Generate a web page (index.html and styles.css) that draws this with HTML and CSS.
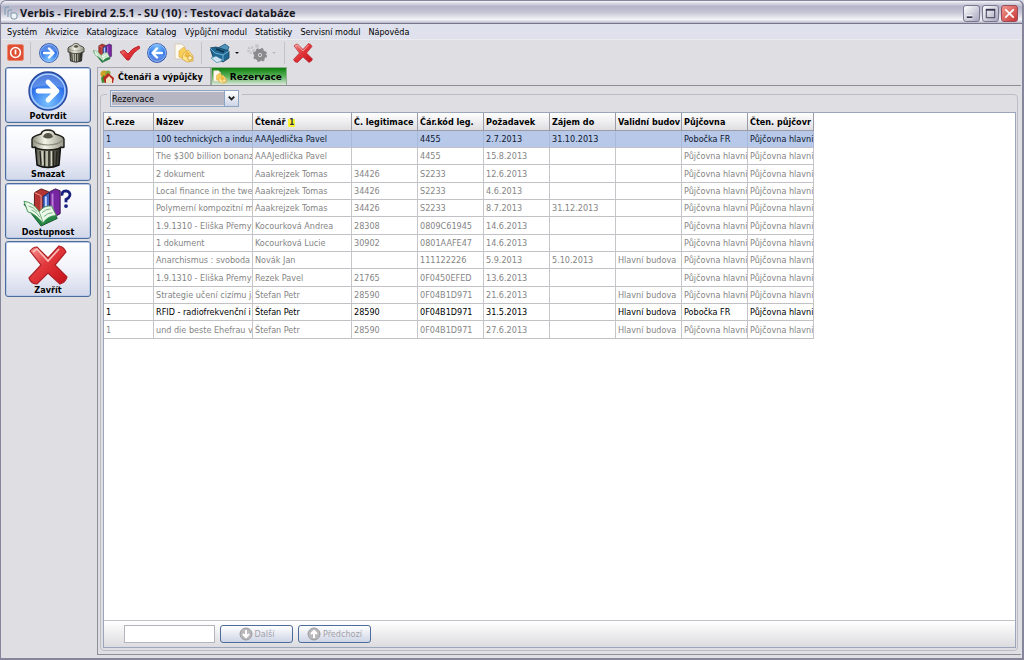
FILE: index.html
```html
<!DOCTYPE html>
<html lang="cs">
<head>
<meta charset="utf-8">
<title>Verbis - Firebird 2.5.1 - SU (10) : Testovací databáze</title>
<link rel="stylesheet" href="styles.css">
</head>
<body>
<svg class="defs" aria-hidden="true">
  <defs>
    <radialGradient id="blue" cx=".5" cy=".8" r=".8"><stop offset="0" stop-color="#7cc4ff"/><stop offset=".6" stop-color="#2f74ea"/><stop offset="1" stop-color="#1d50c8"/></radialGradient>
    <linearGradient id="red" x1="0" y1="0" x2="1" y2="1"><stop offset="0" stop-color="#f79a96"/><stop offset=".45" stop-color="#e2383c"/><stop offset="1" stop-color="#c40f18"/></linearGradient>
    <linearGradient id="metal"><stop offset="0" stop-color="#3a3a32"/><stop offset=".3" stop-color="#b4b4a4"/><stop offset=".6" stop-color="#77776a"/><stop offset="1" stop-color="#25251f"/></linearGradient>
    <linearGradient id="lid"><stop offset="0" stop-color="#8c8c7c"/><stop offset=".4" stop-color="#f4f4e8"/><stop offset="1" stop-color="#98988a"/></linearGradient>
    <symbol id="arrow" viewBox="0 0 40 40"><circle cx="20" cy="20" r="19" fill="url(#blue)" stroke="#2a4a9c" stroke-width="1.4"/><circle cx="20" cy="20" r="17" fill="none" stroke="#a8cbfa" stroke-width="1.6"/><path d="M5 17a15 14 0 0 1 30 0q-15-5-30 0z" fill="#fff" opacity=".22"/><path d="M10 20h18M20 11l9 9-9 9" fill="none" stroke="#fff" stroke-width="4.8" stroke-linecap="round" stroke-linejoin="round"/></symbol>
    <symbol id="trash" viewBox="0 0 36 40"><path d="M5 14l2 22q11 5 22 0l2-22z" fill="url(#metal)" stroke="#111" stroke-width="1.4"/><path d="M10 22l1 14M14.500 22v16M19 22v16M23.500 22v15M27 22l-1 14" stroke="#26261f" stroke-width="1.400"/><path d="M12 22l1 14M17 22v15M21.500 22v15" stroke="#d4d4c2" stroke-width="1.200"/><path d="M2 10q1-3 9-5 1-4 7-4t7 4q8 2 9 5v8q-2 1-3 0-3 3-13 3T5 18q-1 1-3 0z" fill="url(#lid)" stroke="#1a1a16" stroke-width="1.4"/><path d="M3 11q5 5 15 5t15-5" fill="none" stroke="#8a8a7c" stroke-width="1.200"/><path d="M13 8q1-4 5-4t5 4q-5 3-10 0z" fill="#55554a"/></symbol>
    <symbol id="books" viewBox="0 0 42 40"><path d="M12 5l7-4 8 3v22l-8 4-7-3z" fill="#b33430" stroke="#5b1715"/><path d="M12 5l7 3v21" fill="none" stroke="#ef9c94"/><path d="M21 9l6-4 6 3v19l-12 2z" fill="#4267c4" stroke="#182862"/><path d="M24 9v15" stroke="#c5d6ff" stroke-width="2"/><path d="M28 4l6-3 5 2v24l-9 5-2-3z" fill="#7526a0" stroke="#37104c"/><path d="M31 6v23" stroke="#bd7fda" stroke-width="2"/><path d="M1 17l16 10 13-6 6 11-17 8z" fill="#258545" stroke="#145529"/><path d="M1 14q10 1 16 11 5-7 13-6l5 10q-9 0-14 8Q13 27 5 25z" fill="#eaf8e9" stroke="#429454"/><path d="M17 25l4 11M6 19q5 1 9 6M9 23q5 2 9 8M20 26q4-4 9-4M22 30q4-4 9-4" fill="none" stroke="#78a97d"/></symbol>
    <symbol id="question" viewBox="0 0 12 20"><path d="M2 7q-1-5 4-5 5 1 4 5-1 3-4 4v3" fill="none" stroke="#16207c" stroke-width="3"/><circle cx="6" cy="18" r="2" fill="#16207c"/></symbol>
    <symbol id="cross" viewBox="0 0 40 40"><path d="M2 6q3-4 7-4l11 11L31 1q5 1 7 6L27 20l12 12q-1 5-7 7L20 28 9 39q-6 0-8-6l12-13z" fill="url(#red)" stroke="#ad2028" stroke-width="1.200"/><path d="M5 7l4-3 11 12L31 4" fill="none" stroke="#fbc0bb" stroke-width="1.600"/></symbol>
    <symbol id="power" viewBox="0 0 18 18"><rect x=".5" y=".5" width="17" height="17" rx="2" fill="#df4f33" stroke="#ed8a70"/><circle cx="9" cy="9" r="5.200" fill="none" stroke="#fff" stroke-width="1.600"/><path d="M9 6v5" stroke="#fff" stroke-width="1.800"/></symbol>
    <symbol id="check" viewBox="0 0 20 18"><path d="M0 8l4-2 4 4Q12 4 19 2l1 2Q13 8 9 16H7z" fill="url(#red)" stroke="#b4141c" stroke-width=".8"/></symbol>
    <symbol id="pages" viewBox="0 0 20 20"><path d="M1 1h7l3 3v12H1z" fill="#fffaf0" stroke="#d5cbb8"/><path d="M5 8l5-4 3 5-4 6-4-1z" fill="#f7cf5a" stroke="#dba840" stroke-width=".7"/><path d="M9 11l5-4 5 6v5l-6 1-5-3z" fill="#ffe68e" stroke="#d8a43c" stroke-width=".8"/><path d="M13 8l3 3-2 4-4-2z" fill="#edb944"/><circle cx="16" cy="15" r="2.300" fill="#fff2b8" stroke="#d09b38"/></symbol>
    <symbol id="printer" viewBox="0 0 20 20"><path d="M8 5l7-4 4 3-2 5z" fill="#4f93ba" stroke="#1f5577" stroke-width=".8"/><path d="M0 5l6-1 13 4v7l-6 4L3 14z" fill="#1f6690" stroke="#123f58" stroke-width=".8"/><path d="M0 5l5 5 8 2 6-4M13 12v6" fill="none" stroke="#72b4db"/><path d="M1 15l5-2 7 4-6 3z" fill="#cde4f1" stroke="#3a81aa" stroke-width=".7"/><path d="M6 6l8 3" stroke="#0e3148" stroke-width="1.600"/></symbol>
    <symbol id="gears" viewBox="0 0 20 20"><circle cx="4" cy="7" r="2.600" fill="none" stroke="#c4c4c8" stroke-width="2.400" stroke-dasharray="2 1"/><circle cx="10" cy="3" r="2" fill="#c8c8cb"/><circle cx="13" cy="12" r="4" fill="none" stroke="#8a8a8d" stroke-width="4"/><circle cx="13" cy="12" r="6.200" fill="none" stroke="#8a8a8d" stroke-width="1.600" stroke-dasharray="2.500 2.400"/><circle cx="13" cy="12" r="1" fill="#77777a"/></symbol>
    <symbol id="people" viewBox="0 0 14 14"><circle cx="4" cy="4" r="3.500" fill="#c9a227"/><path d="M1 8l3-3 3 7-5 1z" fill="#3e8c2e"/><circle cx="8" cy="3" r="2.500" fill="#7fa83c"/><path d="M3 8l5-5 6 5-1 5H5z" fill="#b92a22"/><path d="M6 9l3-3 3 3v4H6z" fill="#f3e2c4"/></symbol>
    <symbol id="round" viewBox="0 0 14 14"><circle cx="7" cy="7" r="6" fill="#b9b9bc" stroke="#9a9a9e"/><path d="M7 3v7M4 7l3 3 3-3" fill="none" stroke="#fff" stroke-width="2"/></symbol>
    <symbol id="app" viewBox="0 0 14 14"><path d="M1 9V3q0-2 2-2h2M4 11V6q0-2 2-2h2" fill="none" stroke="#8aa4b8" stroke-width="1.300"/><path d="M7 7h4q2 0 2 2v2q0 2-2 2H9q-2 0-2-2z" fill="#eef3f6" stroke="#7b93a6"/></symbol>
  </defs>
</svg>
<div class="window">
  <header class="titlebar">
    <svg class="app-icon"><use href="#app"/></svg>
    <h1>Verbis - Firebird 2.5.1 - SU (10) : Testovací databáze</h1>
    <div class="window-buttons">
      <button type="button" aria-label="Minimalizovat"><svg viewBox="0 0 16 16"><path d="M3 12h6" stroke="#fff" stroke-width="4"/><path d="M3 12h6" stroke="#34364e" stroke-width="2"/></svg></button>
      <button type="button" aria-label="Maximalizovat"><svg viewBox="0 0 16 16"><path d="M3.500 4v8.500h9V4" fill="none" stroke="#34364e"/><path d="M3 4h10" stroke="#34364e" stroke-width="2"/></svg></button>
      <button type="button" class="close" aria-label="Zavřít okno"><svg viewBox="0 0 16 16"><path d="M3.500 3.500l9 9m0-9l-9 9" stroke="#fff" stroke-width="1.800"/></svg></button>
    </div>
  </header>
  <nav class="menu">
    <button type="button">Systém</button><button type="button">Akvizice</button><button type="button">Katalogizace</button><button type="button">Katalog</button><button type="button">Výpůjční modul</button><button type="button">Statistiky</button><button type="button">Servisní modul</button><button type="button">Nápověda</button>
  </nav>
  <div class="toolbar" role="toolbar">
    <button type="button" class="small" aria-label="Konec"><svg><use href="#power"/></svg></button>
    <i class="separator"></i>
    <button type="button" aria-label="Vpřed"><svg><use href="#arrow"/></svg></button>
    <button type="button" aria-label="Koš"><svg><use href="#trash"/></svg></button>
    <button type="button" aria-label="Knihy"><svg><use href="#books"/></svg></button>
    <button type="button" aria-label="Výběr"><svg><use href="#check"/></svg></button>
    <button type="button" aria-label="Zpět"><svg class="flip"><use href="#arrow"/></svg></button>
    <button type="button" aria-label="Dokumenty"><svg><use href="#pages"/></svg></button>
    <i class="separator"></i>
    <button type="button" class="drop" aria-label="Tisk"><svg><use href="#printer"/></svg></button>
    <button type="button" class="drop" disabled aria-label="Nastavení"><svg><use href="#gears"/></svg></button>
    <i class="separator"></i>
    <button type="button" aria-label="Zrušit"><svg><use href="#cross"/></svg></button>
  </div>
  <div class="body">
    <aside class="actions">
      <button type="button"><svg><use href="#arrow"/></svg><span>Potvrdit</span></button>
      <button type="button"><svg><use href="#trash"/></svg><span>Smazat</span></button>
      <button type="button"><svg class="wide" viewBox="0 0 50 40"><use href="#books" width="40" height="40"/><use href="#question" x="37" y="2" width="12" height="19"/></svg><span>Dostupnost</span></button>
      <button type="button"><svg><use href="#cross"/></svg><span>Zavřít</span></button>
    </aside>
    <main class="content">
      <div class="tabs" role="tablist">
        <button type="button" role="tab" class="tab"><svg><use href="#people"/></svg>Čtenáři a výpůjčky</button>
        <button type="button" role="tab" aria-selected="true" class="tab active"><svg><use href="#pages"/></svg>Rezervace</button>
      </div>
      <section class="panel">
        <div class="group">
          <div class="group-title"><div class="combo"><select aria-label="Zobrazení"><option>Rezervace</option></select><svg viewBox="0 0 14 14"><path d="M4 5l3 3 3-3" fill="none" stroke="#222" stroke-width="2"/></svg></div></div>
          <div class="grid">
            <div class="scroll">
              <table>
                <colgroup><col class="c-num"><col class="c-wide"><col class="c-wide"><col><col><col><col><col><col><col></colgroup>
                <thead><tr><th>Č.reze</th><th>Název</th><th>Čtenář <mark>1</mark></th><th>Č. legitimace</th><th>Čár.kód leg.</th><th>Požadavek</th><th>Zájem do</th><th>Validní budov</th><th>Půjčovna</th><th>Čten. půjčovr</th></tr></thead>
                <tbody>
                  <tr class="selected"><td>1</td><td>100 technických a indus</td><td>AAAJedlička Pavel</td><td></td><td>4455</td><td>2.7.2013</td><td>31.10.2013</td><td></td><td>Pobočka FR</td><td>Půjčovna hlavni</td></tr>
                  <tr><td>1</td><td>The $300 billion bonanza</td><td>AAAJedlička Pavel</td><td></td><td>4455</td><td>15.8.2013</td><td></td><td></td><td>Půjčovna hlavni</td><td>Půjčovna hlavni</td></tr>
                  <tr><td>1</td><td>2 dokument</td><td>Aaakrejzek Tomas</td><td>34426</td><td>S2233</td><td>12.6.2013</td><td></td><td></td><td>Půjčovna hlavni</td><td>Půjčovna hlavni</td></tr>
                  <tr><td>1</td><td>Local finance in the twer</td><td>Aaakrejzek Tomas</td><td>34426</td><td>S2233</td><td>4.6.2013</td><td></td><td></td><td>Půjčovna hlavni</td><td>Půjčovna hlavni</td></tr>
                  <tr><td>1</td><td>Polymerní kompozitní ma</td><td>Aaakrejzek Tomas</td><td>34426</td><td>S2233</td><td>8.7.2013</td><td>31.12.2013</td><td></td><td>Půjčovna hlavni</td><td>Půjčovna hlavni</td></tr>
                  <tr><td>2</td><td>1.9.1310 - Eliška Přemys</td><td>Kocourková Andrea</td><td>28308</td><td>0809C61945</td><td>14.6.2013</td><td></td><td></td><td>Půjčovna hlavni</td><td>Půjčovna hlavni</td></tr>
                  <tr><td>1</td><td>1 dokument</td><td>Kocourková Lucie</td><td>30902</td><td>0801AAFE47</td><td>14.6.2013</td><td></td><td></td><td>Půjčovna hlavni</td><td>Půjčovna hlavni</td></tr>
                  <tr><td>1</td><td>Anarchismus : svoboda</td><td>Novák Jan</td><td></td><td>111122226</td><td>5.9.2013</td><td>5.10.2013</td><td>Hlavní budova</td><td>Půjčovna hlavni</td><td>Půjčovna hlavni</td></tr>
                  <tr><td>1</td><td>1.9.1310 - Eliška Přemys</td><td>Rezek Pavel</td><td>21765</td><td>0F0450EFED</td><td>13.6.2013</td><td></td><td></td><td>Půjčovna hlavni</td><td>Půjčovna hlavni</td></tr>
                  <tr><td>1</td><td>Strategie učení cizímu ja</td><td>Štefan Petr</td><td>28590</td><td>0F04B1D971</td><td>21.6.2013</td><td></td><td>Hlavní budova</td><td>Půjčovna hlavni</td><td>Půjčovna hlavni</td></tr>
                  <tr class="ready"><td>1</td><td>RFID - radiofrekvenční i</td><td>Štefan Petr</td><td>28590</td><td>0F04B1D971</td><td>31.5.2013</td><td></td><td>Hlavní budova</td><td>Pobočka FR</td><td>Půjčovna hlavni</td></tr>
                  <tr><td>1</td><td>und die beste Ehefrau v</td><td>Štefan Petr</td><td>28590</td><td>0F04B1D971</td><td>27.6.2013</td><td></td><td>Hlavní budova</td><td>Půjčovna hlavni</td><td>Půjčovna hlavni</td></tr>
                </tbody>
              </table>
            </div>
            <div class="search">
              <input type="text" aria-label="Hledat">
              <button type="button" disabled><svg><use href="#round"/></svg>Další</button>
              <button type="button" disabled><svg class="up"><use href="#round"/></svg>Předchozí</button>
            </div>
          </div>
        </div>
      </section>
    </main>
  </div>
</div>
</body>
</html>
```
FILE: styles.css
```css
* { box-sizing: border-box; }
body { margin: 0; background: #dedee6; color: #000; font: 9px/14px "DejaVu Sans Condensed", "DejaVu Sans", sans-serif; }
button, input, select { font: inherit; color: inherit; margin: 0; padding: 0; border: 0; background: none; }
button { white-space: nowrap; }
svg { display: block; flex: none; }
.defs { position: absolute; width: 0; height: 0; }

.window { display: flex; flex-direction: column; min-height: 100vh; padding: 0 1px 1px; background: #dfdfe3; border: 1px solid #85859c; border-width: 1px 2px 2px 1px; border-radius: 6px 6px 0 0; }

.titlebar { display: flex; align-items: center; height: 23px; margin: 0 -1px; padding: 2px 4px 0 3px; border-bottom: 1px solid #77778c; border-radius: 6px 6px 0 0; background: linear-gradient(#f4f4f8, #b4b4ca 25%, #c4c4d4 50%, #f4f4f8 85%, #b4b4c6); }
.app-icon { width: 14px; height: 14px; }
h1 { flex: 1; margin: 0 0 0 2px; font: bold 11px/16px "Open Sans", "DejaVu Sans Condensed", sans-serif; color: #17171f; }
.window-buttons { display: flex; gap: 2px; }
.window-buttons button { width: 17px; height: 17px; border: 1px solid #77778f; border-radius: 3px; background: linear-gradient(135deg, #fff, #a6a6be); }
.window-buttons svg { width: 15px; height: 15px; }
.window-buttons .close { border-color: #984a58; background: linear-gradient(135deg, #ef9a90, #c93434); }

.menu { display: flex; gap: 8px; height: 16px; padding: 0 5px; background: #dfe1ec; border-bottom: 1px solid #ececf0; }

.toolbar { display: flex; align-items: center; height: 27px; padding: 0 3px 2px; }
.toolbar button { width: 27px; display: flex; justify-content: center; align-items: center; }
.toolbar svg { width: 20px; height: 20px; }
.toolbar .small { width: 21px; }
.toolbar .small svg { width: 17px; height: 17px; }
.separator { width: 1px; height: 22px; margin: 0 4px; background: #c4c4c8; }
.toolbar .drop { width: 37px; gap: 5px; }
.drop::after { content: ""; border: 2px solid transparent; border-top-color: #111; border-bottom: 0; }
.drop:disabled::after { border-top-color: #bbb; }
.flip { transform: rotate(180deg); }

.body { flex: 1; display: flex; gap: 6px; padding: 0 0 2px 3px; }
.actions { display: flex; flex-direction: column; gap: 2px; width: 86px; }
.actions button { display: flex; flex-direction: column; align-items: center; height: 56px; padding-top: 3px; border: 1px solid #4d6c9c; border-radius: 3px; background: linear-gradient(#fff, #f2f3fa 50%, #d2d8ea); box-shadow: inset 0 0 0 1px #b9cbe8; font-weight: bold; line-height: 11px; }
.actions svg { width: 40px; height: 40px; }
.actions .wide { width: 50px; }

.content { flex: 1; min-width: 0; display: flex; flex-direction: column; }
.tabs { display: flex; height: 18px; }
.tab { display: flex; align-items: center; gap: 4px; padding: 0 7px 0 2px; border: 1px solid #a8a8b0; border-bottom: 0; font-weight: bold; line-height: 16px; }
.tab svg { width: 14px; height: 14px; }
.tab.active { gap: 3px; padding: 0 4px 0 1px; background: linear-gradient(#0e800e, #5cb45c 50%, #dfe8df); border-color: #8eb08e; font-family: "DejaVu Sans", sans-serif; }
.panel { flex: 1; display: flex; padding: 8px 3px 3px 2px; border: 1px solid #8e8e98; border-right: 0; }
.group { flex: 1; min-width: 0; display: flex; flex-direction: column; padding: 0 1px 2px 2px; border: 1px solid #bcbcc6; border-radius: 4px; }
.group-title { height: 17px; padding-left: 4px; }
.combo { position: relative; width: 135px; height: 17px; margin-top: -5px; padding: 0 3px; background: #dfdfe3; }
.combo select { width: 129px; height: 17px; padding: 0 16px 0 1px; border: 1px solid #8ba6c4; border-radius: 0; appearance: none; background: #b6b6c2; box-shadow: inset 0 0 0 1px #e4e4ea; }
.combo svg { position: absolute; right: 4px; top: 1px; width: 14px; height: 15px; border-left: 1px solid #8ba6c4; background: linear-gradient(#fff, #cdd4e6); pointer-events: none; }

.grid { flex: 1; display: flex; flex-direction: column; border: 1px solid #9ca6ba; background: #fff; }
.scroll { flex: 1; }
table { width: 710px; table-layout: fixed; border-collapse: separate; border-spacing: 0; color: #858585; }
col { width: 66px; }
.c-num { width: 50px; }
.c-wide { width: 99px; }
th, td { height: 17px; padding: 0 1px 0 2px; overflow: hidden; white-space: nowrap; text-align: left; border-right: 1px solid #c6c6ca; border-bottom: 1px solid #c2c2c6; line-height: 16px; }
tbody tr:nth-child(3n) td { height: 18px; }
th { height: 18px; color: #000; border-color: #9c9ca6; background: linear-gradient(#fff, #dedee2); font-weight: bold; }
mark { display: inline-block; padding: 0 1px; background: #f6f23a; color: #333; font-size: 8px; line-height: 8px; }
.selected td { color: #101830; background: #b7c8e8; border-right-color: #a9b9d8; }
.ready td { color: #000; }

.search { display: flex; align-items: center; gap: 5px; height: 27px; padding-left: 20px; border-top: 1px solid #c2c2c8; background: linear-gradient(#fff, #dcdce0); }
.search input { width: 91px; height: 18px; border: 1px solid #b4b4bc; background: #fff; }
.search button { display: flex; align-items: center; justify-content: center; gap: 2px; width: 73px; height: 18px; border: 1px solid #4d6c9c; border-radius: 3px; color: #a2a2a8; background: linear-gradient(#fff, #ced4e6); }
.search svg { width: 14px; height: 14px; }
.up { transform: rotate(180deg); }
```
